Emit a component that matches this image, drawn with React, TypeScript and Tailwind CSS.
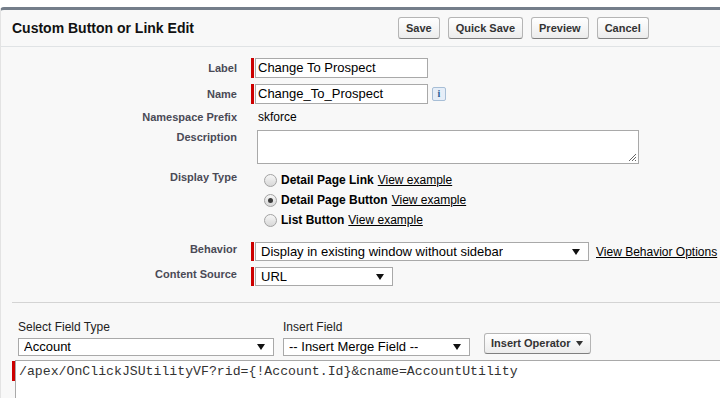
import React from 'react';

const sans = "font-['Liberation_Sans',Arial,sans-serif]";

function Arrow() {
  return (
    <svg width="8" height="6" viewBox="0 0 8 6" className="shrink-0">
      <path d="M0 0 L8 0 L4 6 Z" fill="#111" />
    </svg>
  );
}

function Select({ value, className }: { value: string; className: string }) {
  return (
    <div
      className={`flex items-center justify-between bg-white border border-[#a9a9a9] pl-[5px] pr-[8px] text-[13px] text-black ${className}`}
    >
      <span className="truncate">{value}</span>
      <Arrow />
    </div>
  );
}

function ReqBar({ h }: { h: string }) {
  return <div className={`w-[3px] mr-[1px] bg-[#c00] shrink-0 ${h}`} />;
}

function Btn({ children }: { children: React.ReactNode }) {
  return (
    <button className="h-[22px] px-[7px] rounded-[3px] border border-[#b5b5b5] border-b-[#7f7f7f] bg-linear-to-b from-white to-[#ececec] text-[11px] font-bold text-[#333]">
      {children}
    </button>
  );
}

function Radio({ checked }: { checked?: boolean }) {
  return (
    <span className="w-[13px] h-[13px] rounded-full border border-[#a3a3a3] bg-linear-to-b from-[#f6f6f6] to-[#d8d8d8] flex items-center justify-center shrink-0">
      {checked && <span className="w-[5px] h-[5px] rounded-full bg-[#3c3c3c]" />}
    </span>
  );
}

function RadioRow({ label, checked }: { label: string; checked?: boolean }) {
  return (
    <div className="h-[20px] flex items-center">
      <span className="ml-[9px] mr-[4px]">
        <Radio checked={checked} />
      </span>
      <span className="text-[12px] font-bold text-black">{label}</span>
      <a className="ml-[4px] text-[12px] text-black underline">View example</a>
    </div>
  );
}

const labelCls = 'w-[236px] shrink-0 text-right text-[11px] leading-[14px] font-bold text-[#4a4a56]';

export default function App() {
  return (
    <div className={`w-[720px] h-[398px] overflow-hidden bg-white pt-[7px] ${sans}`}>
      <div className="w-[740px] h-full rounded-tl-[4px] border-t-[3px] border-[#747e8a] border-l border-l-[#e3e3e3] bg-[#f8f8f8]">
        {/* header */}
        <div className="h-[37px] flex items-center border-b border-[#e0e3e5]">
          <div className="w-[397px] pl-[11px] text-[14px] font-bold text-[#111]">Custom Button or Link Edit</div>
          <div className="flex gap-[8px]">
            <Btn>Save</Btn>
            <Btn>Quick Save</Btn>
            <Btn>Preview</Btn>
            <Btn>Cancel</Btn>
          </div>
        </div>

        {/* form */}
        <div className="flex items-start mt-[11px]">
          <div className={`${labelCls} pt-[3px]`}>Label</div>
          <div className="flex pl-[14px]">
            <ReqBar h="h-[20px]" />
            <div className="w-[173px] h-[20px] bg-white border border-[#a9a9a9] pl-[2px] text-[13px] leading-[18px] text-black">
              Change To Prospect
            </div>
          </div>
        </div>

        <div className="flex items-start mt-[6px]">
          <div className={`${labelCls} pt-[3px]`}>Name</div>
          <div className="flex items-center pl-[14px]">
            <ReqBar h="h-[20px]" />
            <div className="w-[173px] h-[20px] bg-white border border-[#a9a9a9] pl-[2px] text-[13px] leading-[18px] text-black">
              Change_To_Prospect
            </div>
            <div className="ml-[4px] w-[14px] h-[14px] rounded-[2px] border border-[#a7bed6] bg-[#e6eef8] flex items-center justify-center text-[10px] font-bold text-[#2b5f93] font-['Liberation_Serif',serif] leading-none">
              i
            </div>
          </div>
        </div>

        <div className="flex items-center h-[20px] mt-[3px]">
          <div className={labelCls}>Namespace Prefix</div>
          <div className="pl-[21px] text-[12px] text-black">skforce</div>
        </div>

        <div className="flex items-start mt-[3px]">
          <div className={`${labelCls} pt-0`}>Description</div>
          <div className="pl-[20px]">
            <div className="relative w-[382px] h-[34px] bg-white border border-[#a9a9a9]">
              <svg width="10" height="10" viewBox="0 0 10 10" className="absolute right-[1px] bottom-[1px]">
                <path d="M2 9 L9 2 M5 9 L9 5 M8 9 L9 8" stroke="#666" strokeWidth="1" />
              </svg>
            </div>
          </div>
        </div>

        <div className="flex items-start mt-[6px]">
          <div className={`${labelCls} pt-0`}>Display Type</div>
          <div className="pl-[18px]">
            <RadioRow label="Detail Page Link" />
            <RadioRow label="Detail Page Button" checked />
            <RadioRow label="List Button" />
          </div>
        </div>

        <div className="flex items-start mt-[12px]">
          <div className={`${labelCls} pt-0`}>Behavior</div>
          <div className="flex items-center pl-[14px]">
            <ReqBar h="h-[19px]" />
            <Select value="Display in existing window without sidebar" className="w-[334px] h-[19px]" />
            <a className="ml-[7px] text-[12px] text-black underline whitespace-nowrap">View Behavior Options</a>
          </div>
        </div>

        <div className="flex items-start mt-[6px]">
          <div className={`${labelCls} pt-0`}>Content Source</div>
          <div className="flex items-center pl-[14px]">
            <ReqBar h="h-[19px]" />
            <Select value="URL" className="w-[138px] h-[19px]" />
          </div>
        </div>

        {/* content section */}
        <div className="ml-[11px] mt-[16px] border-t border-[#d4d4d4]">
          <div className="flex items-end px-[6px] mt-[17px]">
            <div className="w-[265px]">
              <div className="text-[12px] leading-[14px] text-[#222]">Select Field Type</div>
              <Select value="Account" className="mt-[4px] w-[256px] h-[18px]" />
            </div>
            <div className="w-[201px]">
              <div className="text-[12px] leading-[14px] text-[#222]">Insert Field</div>
              <Select value="-- Insert Merge Field --" className="mt-[4px] w-[187px] h-[18px]" />
            </div>
            <button className="mb-[2px] h-[21px] w-[107px] flex items-center justify-between pl-[6px] pr-[7px] rounded-[3px] border border-[#b5b5b5] border-b-[#7f7f7f] bg-linear-to-b from-white to-[#ececec] text-[11px] font-bold text-[#333]">
              Insert Operator
              <svg width="7" height="5" viewBox="0 0 7 5">
                <path d="M0 0 L7 0 L3.5 5 Z" fill="#333" />
              </svg>
            </button>
          </div>
          <div className="flex mt-[4px]">
            <div className="w-[3px] h-[20px] mt-[1px] bg-[#c00] shrink-0" />
            <div className="flex-1 h-[60px] bg-white border border-[#a9a9a9] pl-[3px] pt-[3px] text-[13.2px] leading-[16px] text-[#333] font-['Liberation_Mono','Courier_New',monospace] whitespace-nowrap">
              /apex/OnClickJSUtilityVF?rid={'{'}!Account.Id{'}'}&amp;cname=AccountUtility
            </div>
          </div>
        </div>
      </div>
    </div>
  );
}
